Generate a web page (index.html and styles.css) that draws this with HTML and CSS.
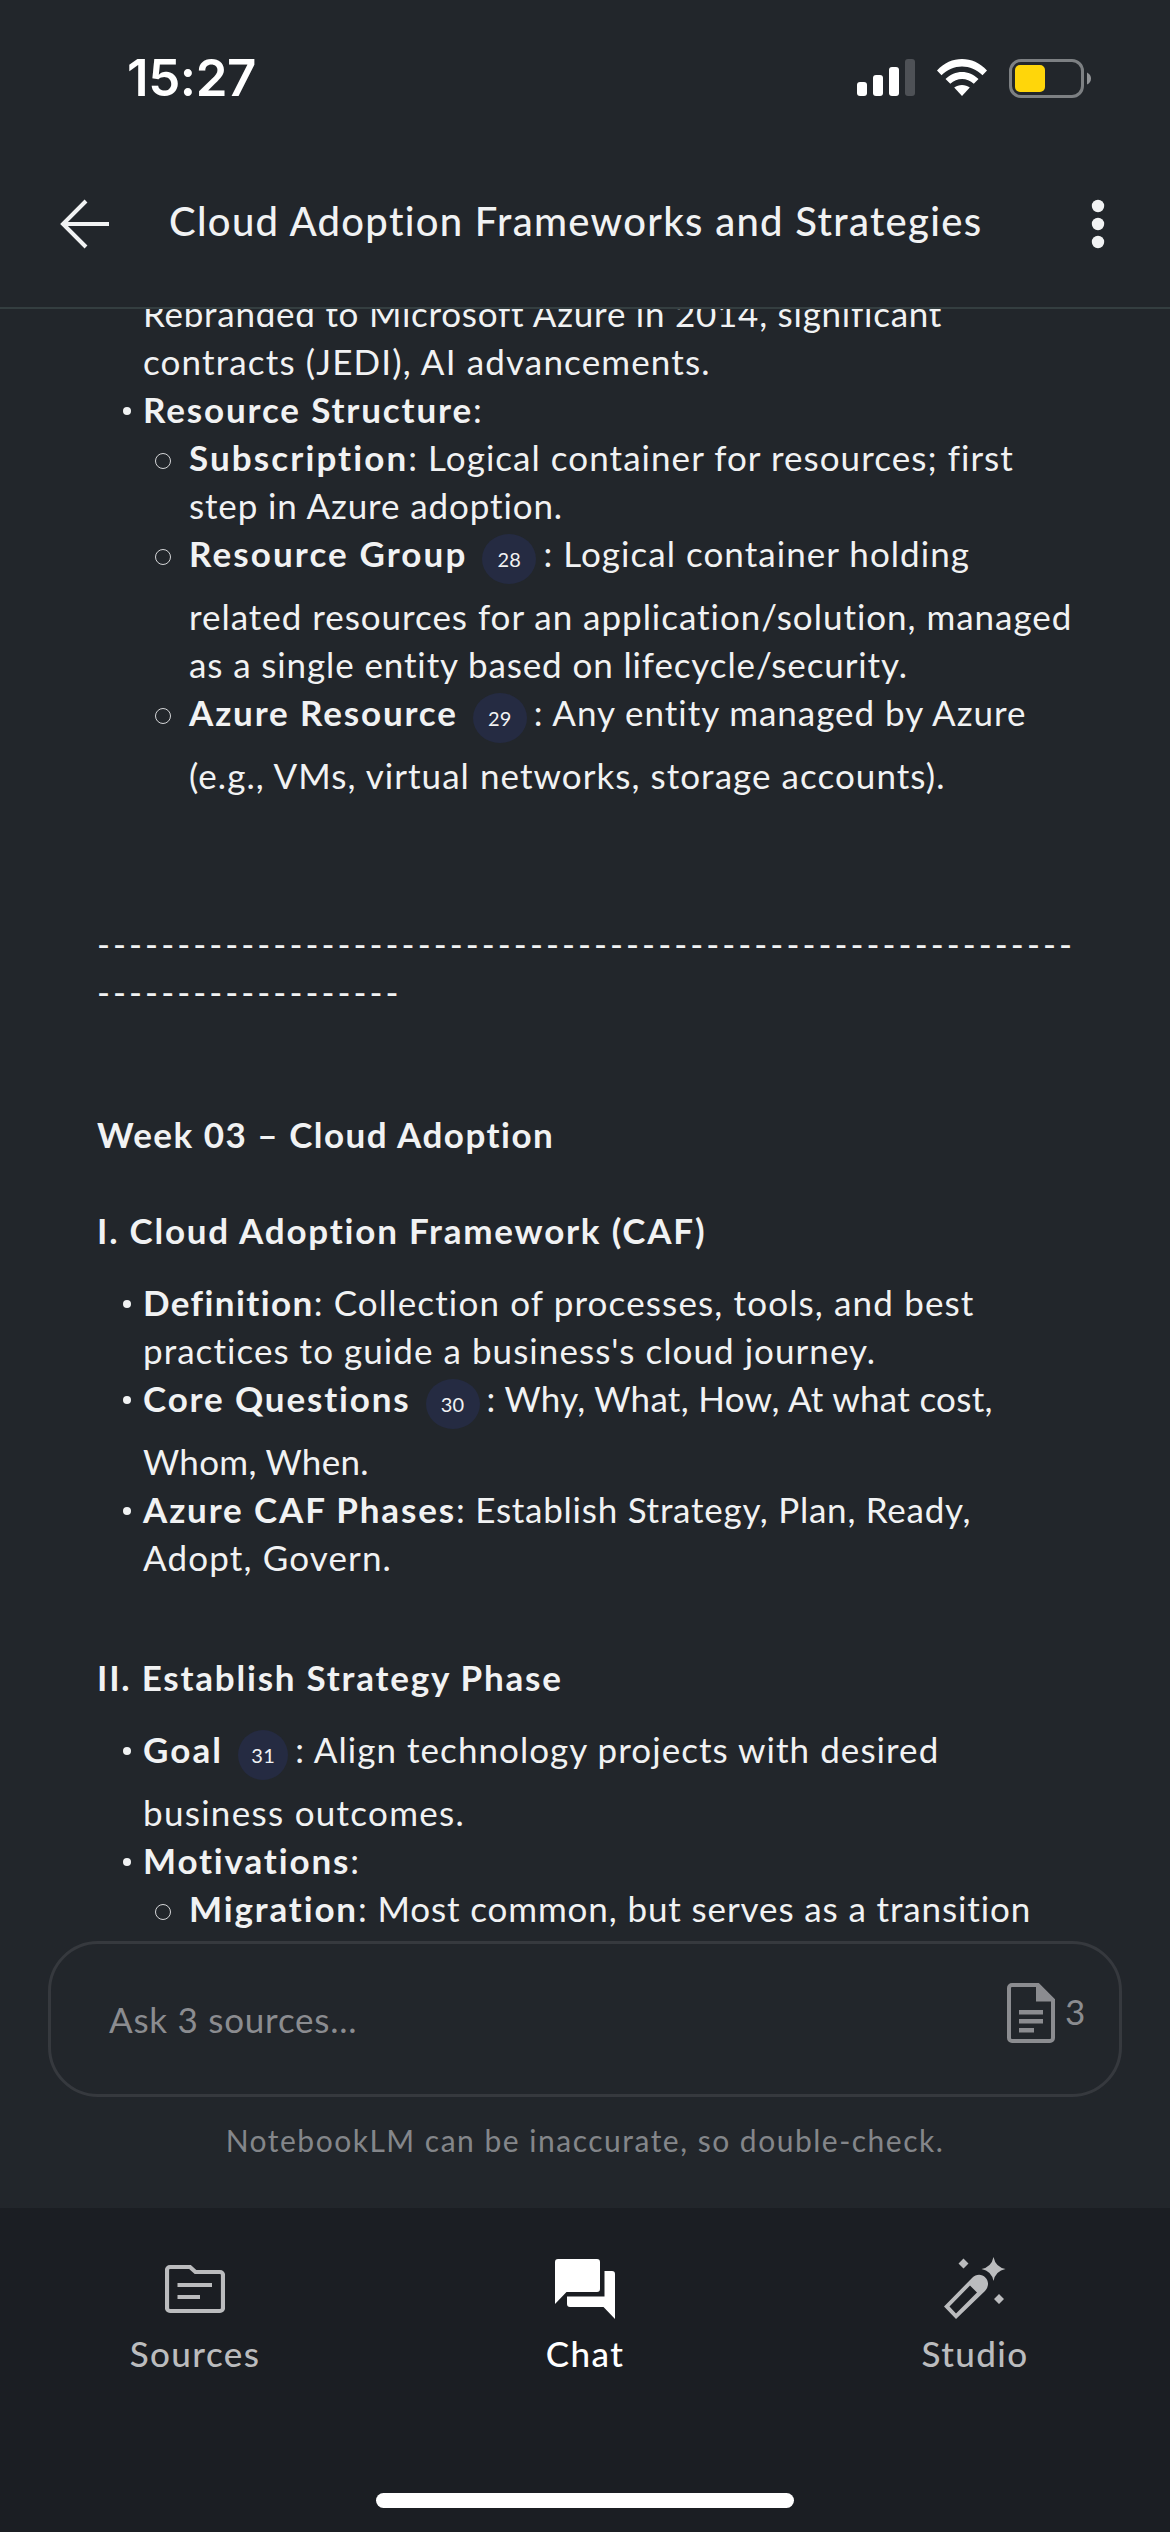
FILE: index.html
```html
<!DOCTYPE html>
<html lang="en">
<head>
<meta charset="utf-8">
<title>Cloud Adoption Frameworks and Strategies</title>
<link rel="stylesheet" href="styles.css">
</head>
<body>
<div class="screen">
  <div class="status-bar">
    <span class="clock">15:27</span>
    <div class="status-icons">
      <svg class="signal" viewBox="0 0 58 38" width="58" height="38"><g fill="#fff"><rect x="0" y="23" width="10" height="14" rx="3"/><rect x="16" y="16" width="10" height="21" rx="3"/><rect x="32" y="8" width="10" height="29" rx="3"/></g><rect x="48" y="0" width="10" height="37" rx="3" fill="#4e5156"/></svg>
      <svg class="wifi" viewBox="0 0 50 38" width="50" height="38" fill="#fff"><path d="M0 11.5C14-3.8 36-3.8 50 11.500L45.500 16.200C34 4.500 16 4.500 4.500 16.200Z"/><path d="M8.500 20C18 10.500 32 10.500 41.500 20L36.800 24.800C30 18.500 20 18.500 13.300 24.800Z"/><path d="M17.200 28.500C21.500 25 28.500 25 32.800 28.500L25 37Z"/></svg>
      <svg class="battery" viewBox="0 0 82 39" width="82" height="39"><rect x="1.500" y="1.500" width="72" height="36" rx="10.500" fill="none" stroke="#7d8083" stroke-width="3"/><rect x="6" y="6" width="30" height="27" rx="5" fill="#ffd60a"/><path d="M78 13.500q4 2 4 6t-4 6z" fill="#919396"/></svg>
    </div>
  </div>

  <header class="app-bar">
    <svg class="back" viewBox="0 0 50 50" width="50" height="50" fill="none" stroke="#f1f2f3" stroke-width="4"><path d="M49 25H3M26 2L3 25L26 48"/></svg>
    <h1 class="title">Cloud Adoption Frameworks and Strategies</h1>
    <svg class="more" viewBox="0 0 14 50" width="14" height="50" fill="#f1f2f3"><circle cx="7" cy="7" r="6.200"/><circle cx="7" cy="25" r="6.200"/><circle cx="7" cy="43" r="6.200"/></svg>
  </header>

  <main class="answer">
    <ul class="list">
      <li class="plain"><span class="track-2">Rebranded to Microsoft Azure in 2014, significant</span><br><span class="track-5">contracts (JEDI), AI advancements.</span></li>
      <li><b>Resource Structure</b>:
        <ul class="sublist">
          <li><b class="b-wide">Subscription</b><span class="track-4">: Logical container for resources; first</span><br>step in Azure adoption.</li>
          <li><b class="b-wide">Resource Group</b><span class="cite">28</span><span class="track-4">: Logical container holding</span><br><span class="track-3">related resources for an application/solution, managed</span><br>as a single entity based on lifecycle/security.</li>
          <li><b>Azure Resource</b><span class="cite">29</span><span class="track-3">: Any entity managed by Azure</span><br><span class="track-4">(e.g., VMs, virtual networks, storage accounts).</span></li>
        </ul>
      </li>
    </ul>
    <p class="rule">-------------------------------------------------------------<br>-------------------</p>
    <h2 class="week">Week 03 – Cloud Adoption</h2>
    <h3 class="section">I. Cloud Adoption Framework (CAF)</h3>
    <ul class="list">
      <li><b class="b-tight">Definition</b><span class="track-5">: Collection of processes, tools, and best</span><br><span class="track-4">practices to guide a business's cloud journey.</span></li>
      <li><b>Core Questions</b><span class="cite">30</span><span class="track-1">: Why, What, How, At what cost,</span><br><span class="track-1">Whom, When.</span></li>
      <li><b>Azure CAF Phases</b><span class="track-2">: Establish Strategy, Plan, Ready,</span><br><span class="track-5">Adopt, Govern.</span></li>
    </ul>
    <h3 class="section second">II. Establish Strategy Phase</h3>
    <ul class="list">
      <li><b class="b-wide">Goal</b><span class="cite narrow">31</span><span class="track-4">: Align technology projects with desired</span><br><span class="track-6">business outcomes.</span></li>
      <li><b>Motivations</b>:
        <ul class="sublist">
          <li><b>Migration</b>: Most common, but serves as a transition</li>
        </ul>
      </li>
    </ul>
  </main>

  <section class="composer">
    <div class="ask">
      <span class="placeholder">Ask 3 sources...</span>
      <div class="count">
        <svg viewBox="0 0 48 60" width="48" height="60"><path d="M5 2H31L46 17V55a3 3 0 0 1-3 3H5a3 3 0 0 1-3-3V5a3 3 0 0 1 3-3Z" fill="none" stroke="#8b8c90" stroke-width="4"/><path d="M29 1H32L47 16V18.500H29Z" fill="#8b8c90"/><path d="M12 29.200H36M12 38.200H36M12 47.200H27" stroke="#8b8c90" stroke-width="4.400"/></svg>
        <span class="number">3</span>
      </div>
    </div>
    <p class="notice">NotebookLM can be inaccurate, so double-check.</p>
  </section>

  <nav class="tabs">
    <div class="tab">
      <svg viewBox="0 0 60 60" width="60" height="60"><path d="M5 8H25L30.500 13H55a3 3 0 0 1 3 3V49a3 3 0 0 1-3 3H5a3 3 0 0 1-3-3V11a3 3 0 0 1 3-3ZM12.500 26H47M12.500 38H35" fill="none" stroke="#bbbcbe" stroke-width="4.200"/></svg>
      <span>Sources</span>
    </div>
    <div class="tab active">
      <svg viewBox="0 0 60 60" width="60" height="60" fill="#fff"><path d="M3 0H42a3 3 0 0 1 3 3V30a3 3 0 0 1-3 3H11.500L0 45V3a3 3 0 0 1 3-3Z"/><path d="M49.500 12H57a3 3 0 0 1 3 3V60L48.500 48H15a3 3 0 0 1-3-3V37.500H49.500Z"/></svg>
      <span>Chat</span>
    </div>
    <div class="tab">
      <svg class="wand" viewBox="0 0 62 62" width="62" height="62" fill="#bbbcbe"><path fill-rule="evenodd" d="M0 49.500L28 21C37 12 50 24 41 34L12 62ZM5.500 49.500L26 28.500L33 35.500L12 56.500Z"/><path d="M49.500 0Q51.500 10 61.500 12Q51.500 14 49.500 24Q47.500 14 37.500 12Q47.500 10 49.500 0Z"/><path d="M19.500 1.500L24.500 6.500L19.500 11.500L14.500 6.500ZM55 37L60 42L55 47L50 42Z"/></svg>
      <span>Studio</span>
    </div>
  </nav>
  <div class="home"><i class="home-bar"></i></div>
</div>
</body>
</html>
```
FILE: styles.css
```css
* { box-sizing: border-box; margin: 0; padding: 0; }
body { background: #22262b; color: #f1f2f3; font-family: Lato, sans-serif; }
.screen { width: 1170px; height: 2532px; display: flex; flex-direction: column; overflow: hidden; }
svg { display: block; flex: none; }

.status-bar { flex: none; height: 140px; padding: 16px 79px 0 127px; display: flex; align-items: center; justify-content: space-between; }
.clock { font: 600 51px/60px Inter, sans-serif; letter-spacing: -.4px; color: #fff; }
.status-icons { display: flex; align-items: center; gap: 22px; }

.app-bar { flex: none; height: 169px; padding: 0 65px 0 60px; display: flex; align-items: center; border-bottom: 2px solid #343e40; }
.title { flex: 1; margin-left: 59px; padding-bottom: 5px; font-size: 40px; font-weight: 500; line-height: 50px; letter-spacing: 1.3px; white-space: nowrap; }

.answer { flex: none; height: 1632px; overflow: hidden; font-size: 35px; line-height: 48px; letter-spacing: .88px; white-space: nowrap; }
.list, .sublist { list-style: none; }
.list { padding-left: 143px; }
.answer > .list:first-child { margin-top: -20px; }
.list > li, .sublist > li { position: relative; }
.sublist { padding-left: 46px; }
.list > li:not(.plain)::before { content: ""; position: absolute; left: -20px; top: 22px; width: 8px; height: 8px; border-radius: 50%; background: #f1f2f3; }
.sublist > li::before { content: ""; position: absolute; left: -34px; top: 20px; width: 14px; height: 14px; border-radius: 50%; border: 1px solid #d5d6d8; }
b { letter-spacing: 1.85px; }
.b-wide { letter-spacing: 2.1px; }
.b-tight { letter-spacing: 1.4px; }
.track-1 { letter-spacing: .3px; }
.track-2 { letter-spacing: .75px; }
.track-3 { letter-spacing: .97px; }
.track-4 { letter-spacing: 1.05px; }
.track-5 { letter-spacing: 1.15px; }
.track-6 { letter-spacing: 1.3px; }
.cite { display: inline-flex; vertical-align: top; align-items: center; justify-content: center; width: 54px; height: 50px; margin: 5px 7px 8px 15px; border-radius: 50%; background: #252b42; font-size: 20px; letter-spacing: .3px; }
.cite.narrow { width: 50px; }
.rule { margin: 120px 0 0 97px; letter-spacing: 3.030px; }
.week, .section { padding-left: 97px; font-size: 35px; font-weight: 700; line-height: 48px; letter-spacing: 1.78px; }
.week { margin-top: 95px; letter-spacing: 1.500px; }
.section { margin: 48px 0 24px; }
.section.second { margin-top: 72px; }

.composer { flex: none; height: 267px; padding: 0 48px; }
.ask { height: 156px; border: 3px solid #36393e; border-radius: 50px; padding: 0 33px 0 58px; display: flex; justify-content: space-between; align-items: center; color: #8b8c90; font-size: 35px; letter-spacing: .75px; }
.count { display: flex; align-items: center; gap: 10px; margin-top: -12px; }
.number { padding-bottom: 5px; }
.notice { text-align: center; margin-top: 23px; font-size: 30px; line-height: 40px; letter-spacing: 1.5px; color: #84868a; }

.tabs { flex: none; height: 259px; padding-top: 51px; background: #1b1e23; display: grid; grid-template-columns: repeat(3, 1fr); }
.tab { display: flex; flex-direction: column; align-items: center; gap: 12px; font-size: 35px; line-height: 44px; font-weight: 500; letter-spacing: 1.4px; color: #bbbcbe; }
.active { color: #fff; }
.wand { margin-top: -2px; }
.home { flex: 1; background: #1b1e23; display: flex; justify-content: center; padding-top: 26px; }
.home-bar { width: 418px; height: 15px; border-radius: 8px; background: #fff; }
```
